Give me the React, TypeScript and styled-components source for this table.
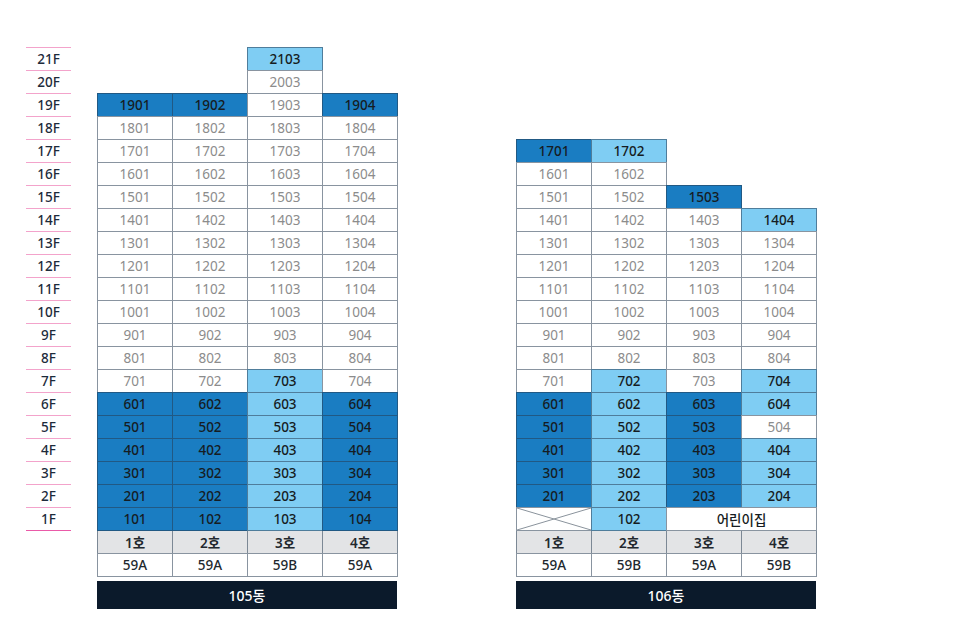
import React from "react";
import styled, { createGlobalStyle } from "styled-components";

const Global = createGlobalStyle`
  html, body { margin: 0; padding: 0; background: #ffffff; }
  body { font-family: "Noto Sans", "Noto Sans CJK KR", sans-serif; }
`;

type Tone = "dark" | "light" | "white" | "empty" | "x" | "note";

const DARK = "#1a7dc2";
const LIGHT = "#7fcdf3";

const Page = styled.div`
  display: flex;
  align-items: flex-start;
  padding: 47px 0 0 26px;
  width: 967px;
  height: 641px;
  box-sizing: border-box;
`;

const FloorColumn = styled.div`
  display: flex;
  flex-direction: column;
  width: 45px;
  margin-right: 26px;
`;

const FloorLabel = styled.div<{ $last?: boolean }>`
  box-sizing: border-box;
  height: ${(p) => (p.$last ? 24 : 23)}px;
  border-top: 1px solid #f3a3cb;
  border-bottom: ${(p) => (p.$last ? "1px solid #ea5aa8" : "none")};
  display: flex;
  align-items: center;
  justify-content: center;
  font-size: 13.5px;
  font-weight: 500;
  color: #1d2b3b;
`;

const Building = styled.div<{ $gap?: number }>`
  display: flex;
  flex-direction: column;
  margin-right: ${(p) => p.$gap ?? 0}px;
`;

const Grid = styled.div`
  display: grid;
  grid-template-columns: repeat(4, 75px);
  grid-auto-rows: 23px;
`;

const Cell = styled.div<{ $tone: Tone; $span?: number }>`
  position: relative;
  box-sizing: border-box;
  width: calc(100% + 1px);
  height: calc(100% + 1px);
  grid-column: ${(p) => (p.$span ? `span ${p.$span}` : "auto")};
  border: ${(p) => (p.$tone === "empty" ? "none" : "1px solid rgba(40, 60, 82, 0.55)")};
  background: ${(p) =>
    p.$tone === "dark" ? DARK : p.$tone === "light" ? LIGHT : p.$tone === "empty" ? "transparent" : "#ffffff"};
  display: flex;
  align-items: center;
  justify-content: center;
  font-size: 13.5px;
  font-weight: ${(p) => (p.$tone === "white" ? 400 : 500)};
  color: ${(p) => (p.$tone === "white" ? "#8c8c8c" : "#161c22")};
`;

const HeadCell = styled.div<{ $kind: "unit" | "type" }>`
  box-sizing: border-box;
  width: calc(100% + 1px);
  height: calc(100% + 1px);
  border: 1px solid rgba(40, 60, 82, 0.55);
  background: ${(p) => (p.$kind === "unit" ? "#e3e4e6" : "#ffffff")};
  display: flex;
  align-items: center;
  justify-content: center;
  font-size: 13.5px;
  font-weight: ${(p) => (p.$kind === "unit" ? 600 : 500)};
  color: #22282e;
  font-family: "Noto Sans", "Noto Sans CJK KR", sans-serif;
`;

const CrossSvg = styled.svg`
  position: absolute;
  inset: 0;
  width: 100%;
  height: 100%;
`;

const NameBar = styled.div`
  margin-top: 5px;
  width: 300px;
  height: 28px;
  background: #0b1a2b;
  color: #ffffff;
  display: flex;
  align-items: center;
  justify-content: center;
  font-size: 14px;
  font-weight: 500;
  font-family: "Noto Sans", "Noto Sans CJK KR", sans-serif;
`;

type CellDef = { tone: Tone; text?: string; span?: number };

const floors = Array.from({ length: 21 }, (_, i) => 21 - i);

function unit(floor: number, col: number) {
  return `${floor}0${col}`;
}

// Building 105
function b105(floor: number): CellDef[] {
  const row: CellDef[] = [];
  for (let c = 1; c <= 4; c++) {
    const top = c === 3 ? 21 : 19;
    if (floor > top) {
      row.push({ tone: "empty" });
      continue;
    }
    let tone: Tone = "white";
    if (c === 3) {
      if (floor === 21 || floor === 7 || floor <= 6) tone = "light";
    } else {
      if (floor === 19 || floor <= 6) tone = "dark";
    }
    row.push({ tone, text: unit(floor, c) });
  }
  return row;
}

// Building 106
const tops106 = [17, 17, 15, 14];
const dark106 = new Set([
  "1701", "1503",
  "601", "501", "401", "301", "201",
  "603", "503", "403", "303", "203",
]);
const light106 = new Set([
  "1702", "1404",
  "702", "602", "502", "402", "302", "202", "102",
  "704", "604", "404", "304", "204",
]);

function b106(floor: number): CellDef[] {
  if (floor === 1) {
    return [
      { tone: "x" },
      { tone: "light", text: "102" },
      { tone: "note", text: "어린이집", span: 2 },
    ];
  }
  const row: CellDef[] = [];
  for (let c = 1; c <= 4; c++) {
    if (floor > tops106[c - 1]) {
      row.push({ tone: "empty" });
      continue;
    }
    const id = unit(floor, c);
    const tone: Tone = dark106.has(id) ? "dark" : light106.has(id) ? "light" : "white";
    row.push({ tone, text: id });
  }
  return row;
}

const BuildingBlock: React.FC<{
  name: string;
  rowFn: (f: number) => CellDef[];
  types: string[];
  gap?: number;
}> = ({ name, rowFn, types, gap }) => (
  <Building $gap={gap}>
    <Grid>
      {floors.map((f) =>
        rowFn(f).map((cell, i) => (
          <Cell key={`${f}-${i}`} $tone={cell.tone} $span={cell.span}>
            {cell.tone === "x" && (
              <CrossSvg viewBox="0 0 100 100" preserveAspectRatio="none">
                <line x1="0" y1="0" x2="100" y2="100" stroke="#8a939c" strokeWidth="1" vectorEffect="non-scaling-stroke" />
                <line x1="100" y1="0" x2="0" y2="100" stroke="#8a939c" strokeWidth="1" vectorEffect="non-scaling-stroke" />
              </CrossSvg>
            )}
            {cell.text}
          </Cell>
        ))
      )}
      {[1, 2, 3, 4].map((n) => (
        <HeadCell key={`u${n}`} $kind="unit">{`${n}호`}</HeadCell>
      ))}
      {types.map((t, i) => (
        <HeadCell key={`t${i}`} $kind="type">{t}</HeadCell>
      ))}
    </Grid>
    <NameBar>{name}</NameBar>
  </Building>
);

export default function App() {
  return (
    <>
      <Global />
      <Page>
        <FloorColumn>
          {floors.map((f) => (
            <FloorLabel key={f} $last={f === 1}>{`${f}F`}</FloorLabel>
          ))}
        </FloorColumn>
        <BuildingBlock name="105동" rowFn={b105} types={["59A", "59A", "59B", "59A"]} gap={119} />
        <BuildingBlock name="106동" rowFn={b106} types={["59A", "59B", "59A", "59B"]} />
      </Page>
    </>
  );
}
